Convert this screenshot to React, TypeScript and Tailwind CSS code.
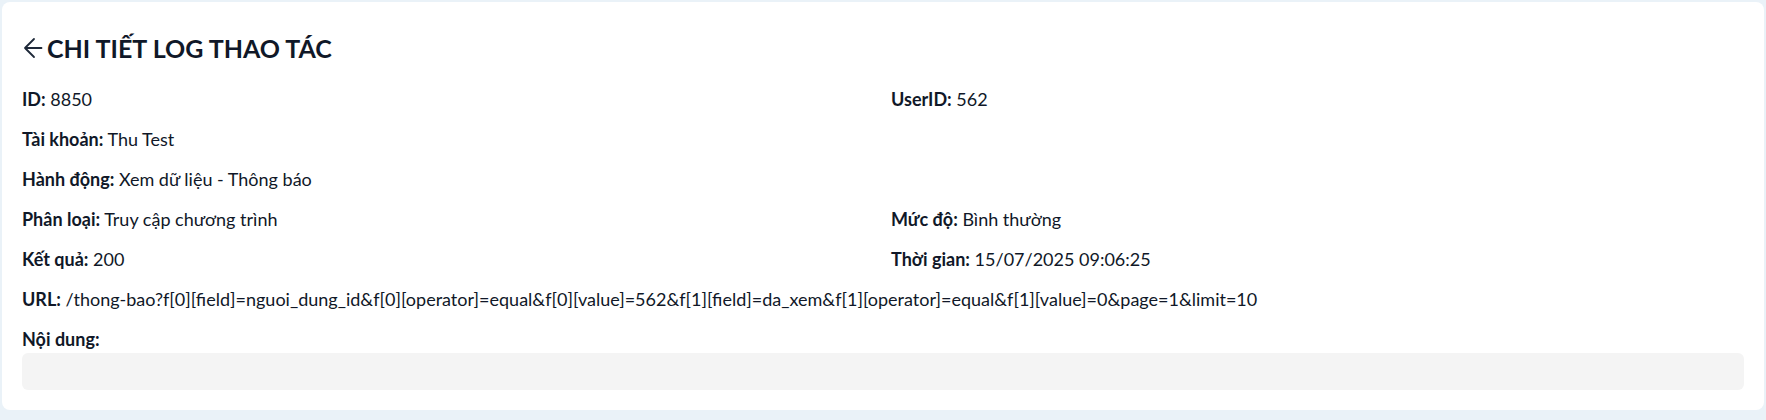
const log = {
  id: 8850,
  userId: 562,
  account: "Thu Test",
  action: "Xem dữ liệu - Thông báo",
  category: "Truy cập chương trình",
  level: "Bình thường",
  result: 200,
  time: "15/07/2025 09:06:25",
  url: "/thong-bao?f[0][field]=nguoi_dung_id&f[0][operator]=equal&f[0][value]=562&f[1][field]=da_xem&f[1][operator]=equal&f[1][value]=0&page=1&limit=10",
  content: "",
};

function Field({ label, value, wide }: { label: string; value?: string | number; wide?: boolean }) {
  return (
    <p className={`leading-7 ${wide ? "col-span-2" : ""}`}>
      <span className="font-bold">{label}:</span> {value}
    </p>
  );
}

function ArrowLeft() {
  return (
    <svg width="21" height="22" viewBox="0 0 21 22" fill="none" className="shrink-0 text-gray-800">
      <path d="M12 2 3 11l9 9M3 11h16.5" stroke="currentColor" strokeWidth="1.8" strokeLinecap="round" strokeLinejoin="round" />
    </svg>
  );
}

export default function App() {
  return (
    <div className="min-h-screen bg-[#eaf2f8] p-0.5 font-['Lato',sans-serif] text-gray-900">
      <div className="rounded-lg bg-white px-5 pt-5 pb-5">
        <div className="mt-[10px] mb-[21px] flex items-center gap-1">
          <ArrowLeft />
          <h1 className="text-[25px] leading-8 font-bold">CHI TIẾT LOG THAO TÁC</h1>
        </div>

        <div className="grid grid-cols-2 gap-x-4 gap-y-3 text-lg">
          <Field label="ID" value={log.id} />
          <Field label="UserID" value={log.userId} />
          <Field label="Tài khoản" value={log.account} wide />
          <Field label="Hành động" value={log.action} wide />
          <Field label="Phân loại" value={log.category} />
          <Field label="Mức độ" value={log.level} />
          <Field label="Kết quả" value={log.result} />
          <Field label="Thời gian" value={log.time} />
          <Field label="URL" value={log.url} wide />
          <div className="col-span-2">
            <p className="leading-7 font-bold">Nội dung:</p>
            <div className="h-[37px] rounded-md bg-[#f4f4f4] px-3 py-2">{log.content}</div>
          </div>
        </div>
      </div>
    </div>
  );
}
